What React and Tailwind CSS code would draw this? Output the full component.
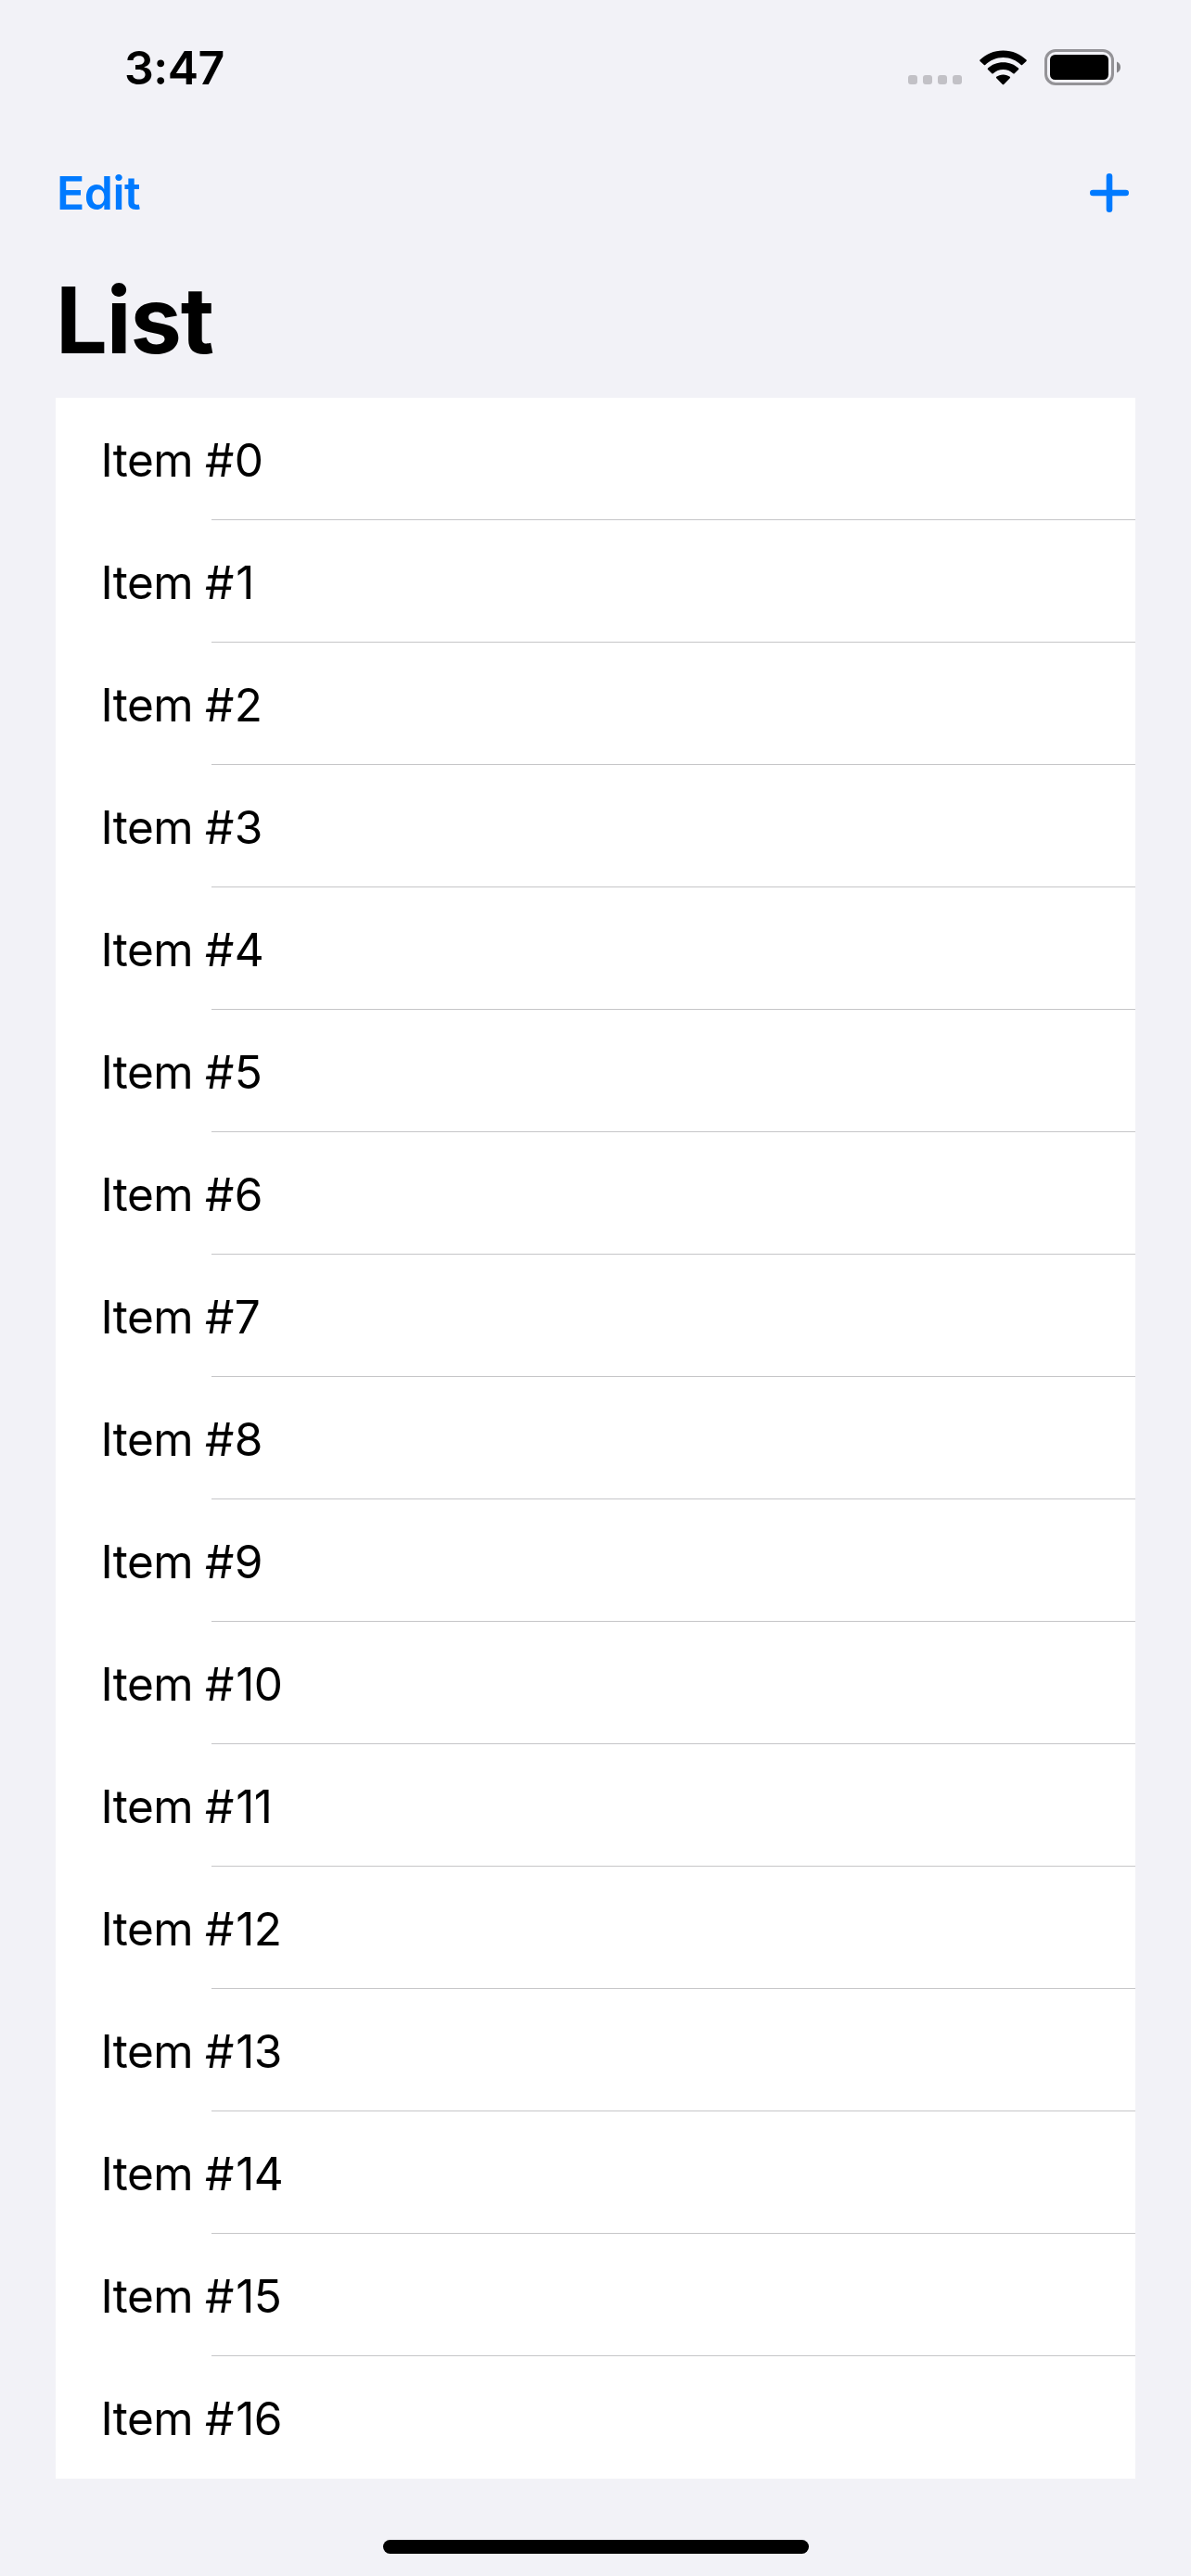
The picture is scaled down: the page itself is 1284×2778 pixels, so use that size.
import React from "react";

const items = Array.from({ length: 17 }, (_, i) => String(i));

function StatusBar() {
  return (
    <div className="flex h-[144px] items-start justify-between pt-[43px] pr-[76px] pl-[134px]">
      <span className="text-[50px] leading-[60px] font-semibold tracking-[-0.5px]">3:47</span>
      <div className="flex h-[60px] items-start pt-[10px]">
        <div className="mt-[28px] flex gap-[6px]">
          {[0, 1, 2, 3].map((n) => (
            <span key={n} className="size-[10px] rounded-[3px] bg-[#c2c1c6]" />
          ))}
        </div>
        <svg className="mt-px ml-[18px] h-[38px] w-[52px]" viewBox="-0.5 -0.4 52 38">
          <path d="M26 0C36 0 44.8 3.9 51 10.1Q51.6 10.8 51 11.5L46.6 15.7Q46 16.2 45.3 15.7C40.2 10.7 33.5 7.7 26 7.7S11.8 10.7 6.7 15.7Q6 16.2 5.4 15.7L1 11.5Q0.4 10.8 1 10.1C7.2 3.9 16 0 26 0Z" />
          <path d="M26 12.8C32.5 12.8 38.3 15.2 42.5 19.1Q43.2 19.9 42.5 20.6L38.2 24.9Q37.5 25.4 36.8 24.9C33.9 22.2 30.1 20.7 26 20.7S18.1 22.2 15.2 24.9Q14.5 25.4 13.8 24.9L9.5 20.6Q8.8 19.9 9.5 19.1C13.7 15.2 19.5 12.8 26 12.8Z" />
          <path d="M26 26C28.9 26 31.4 26.9 33.3 28.4Q34 29.2 33.3 29.9L26.7 36.5Q26 37 25.3 36.5L18.7 29.9Q18 29.2 18.7 28.4C20.6 26.9 23.1 26 26 26Z" />
        </svg>
        <svg className="ml-[19px] h-[39px] w-[82px]" viewBox="0 0 82 39">
          <rect x="1.5" y="1.5" width="72" height="36" rx="10.5" fill="none" stroke="#949397" strokeWidth="3" />
          <rect x="6" y="6" width="63" height="27" rx="5.5" />
          <path d="M78 13.5C80.5 14.5 82 16.8 82 19.5S80.5 24.5 78 25.5Z" fill="#858488" />
        </svg>
      </div>
    </div>
  );
}

function NavBar() {
  return (
    <div className="flex h-[128px] items-center justify-between pr-[66px] pl-[61px] text-[#007aff]">
      <button className="text-[50px] leading-[60px] font-semibold tracking-[-0.5px]">Edit</button>
      <button aria-label="Add">
        <svg className="h-[44px] w-[44px]" viewBox="0 0 44 44" fill="none" stroke="currentColor" strokeWidth="6.6" strokeLinecap="round">
          <path d="M22 4.3V39.7M4.3 22H39.7" />
        </svg>
      </button>
    </div>
  );
}

export default function App() {
  return (
    <div className="flex h-[2778px] w-[1284px] flex-col bg-[#f2f2f7] font-['Inter',sans-serif] text-black">
      <StatusBar />
      <NavBar />
      <h1 className="h-[157px] pt-[13px] pl-[60px] text-[99px] leading-[120px] font-bold tracking-[-1.2px]">List</h1>
      <ul className="mx-[60px] bg-white">
        {items.map((n, i) => (
          <li key={n} className="flex h-[132px] flex-col">
            <div className="h-[131px] pt-[2px] pl-[48.500px] text-[49.5px] leading-[131px] tracking-[-0.65px]">
              Item #<span className={n.startsWith("1") ? "ml-[2.5px]" : "ml-[0.8px]"}>{n}</span>
            </div>
            {i < items.length - 1 && <div className="ml-[168px] h-px bg-[#c6c6c8]" />}
          </li>
        ))}
      </ul>
      <div className="mt-[66px] ml-[413px] h-[15px] w-[459px] rounded-full bg-black" />
    </div>
  );
}
